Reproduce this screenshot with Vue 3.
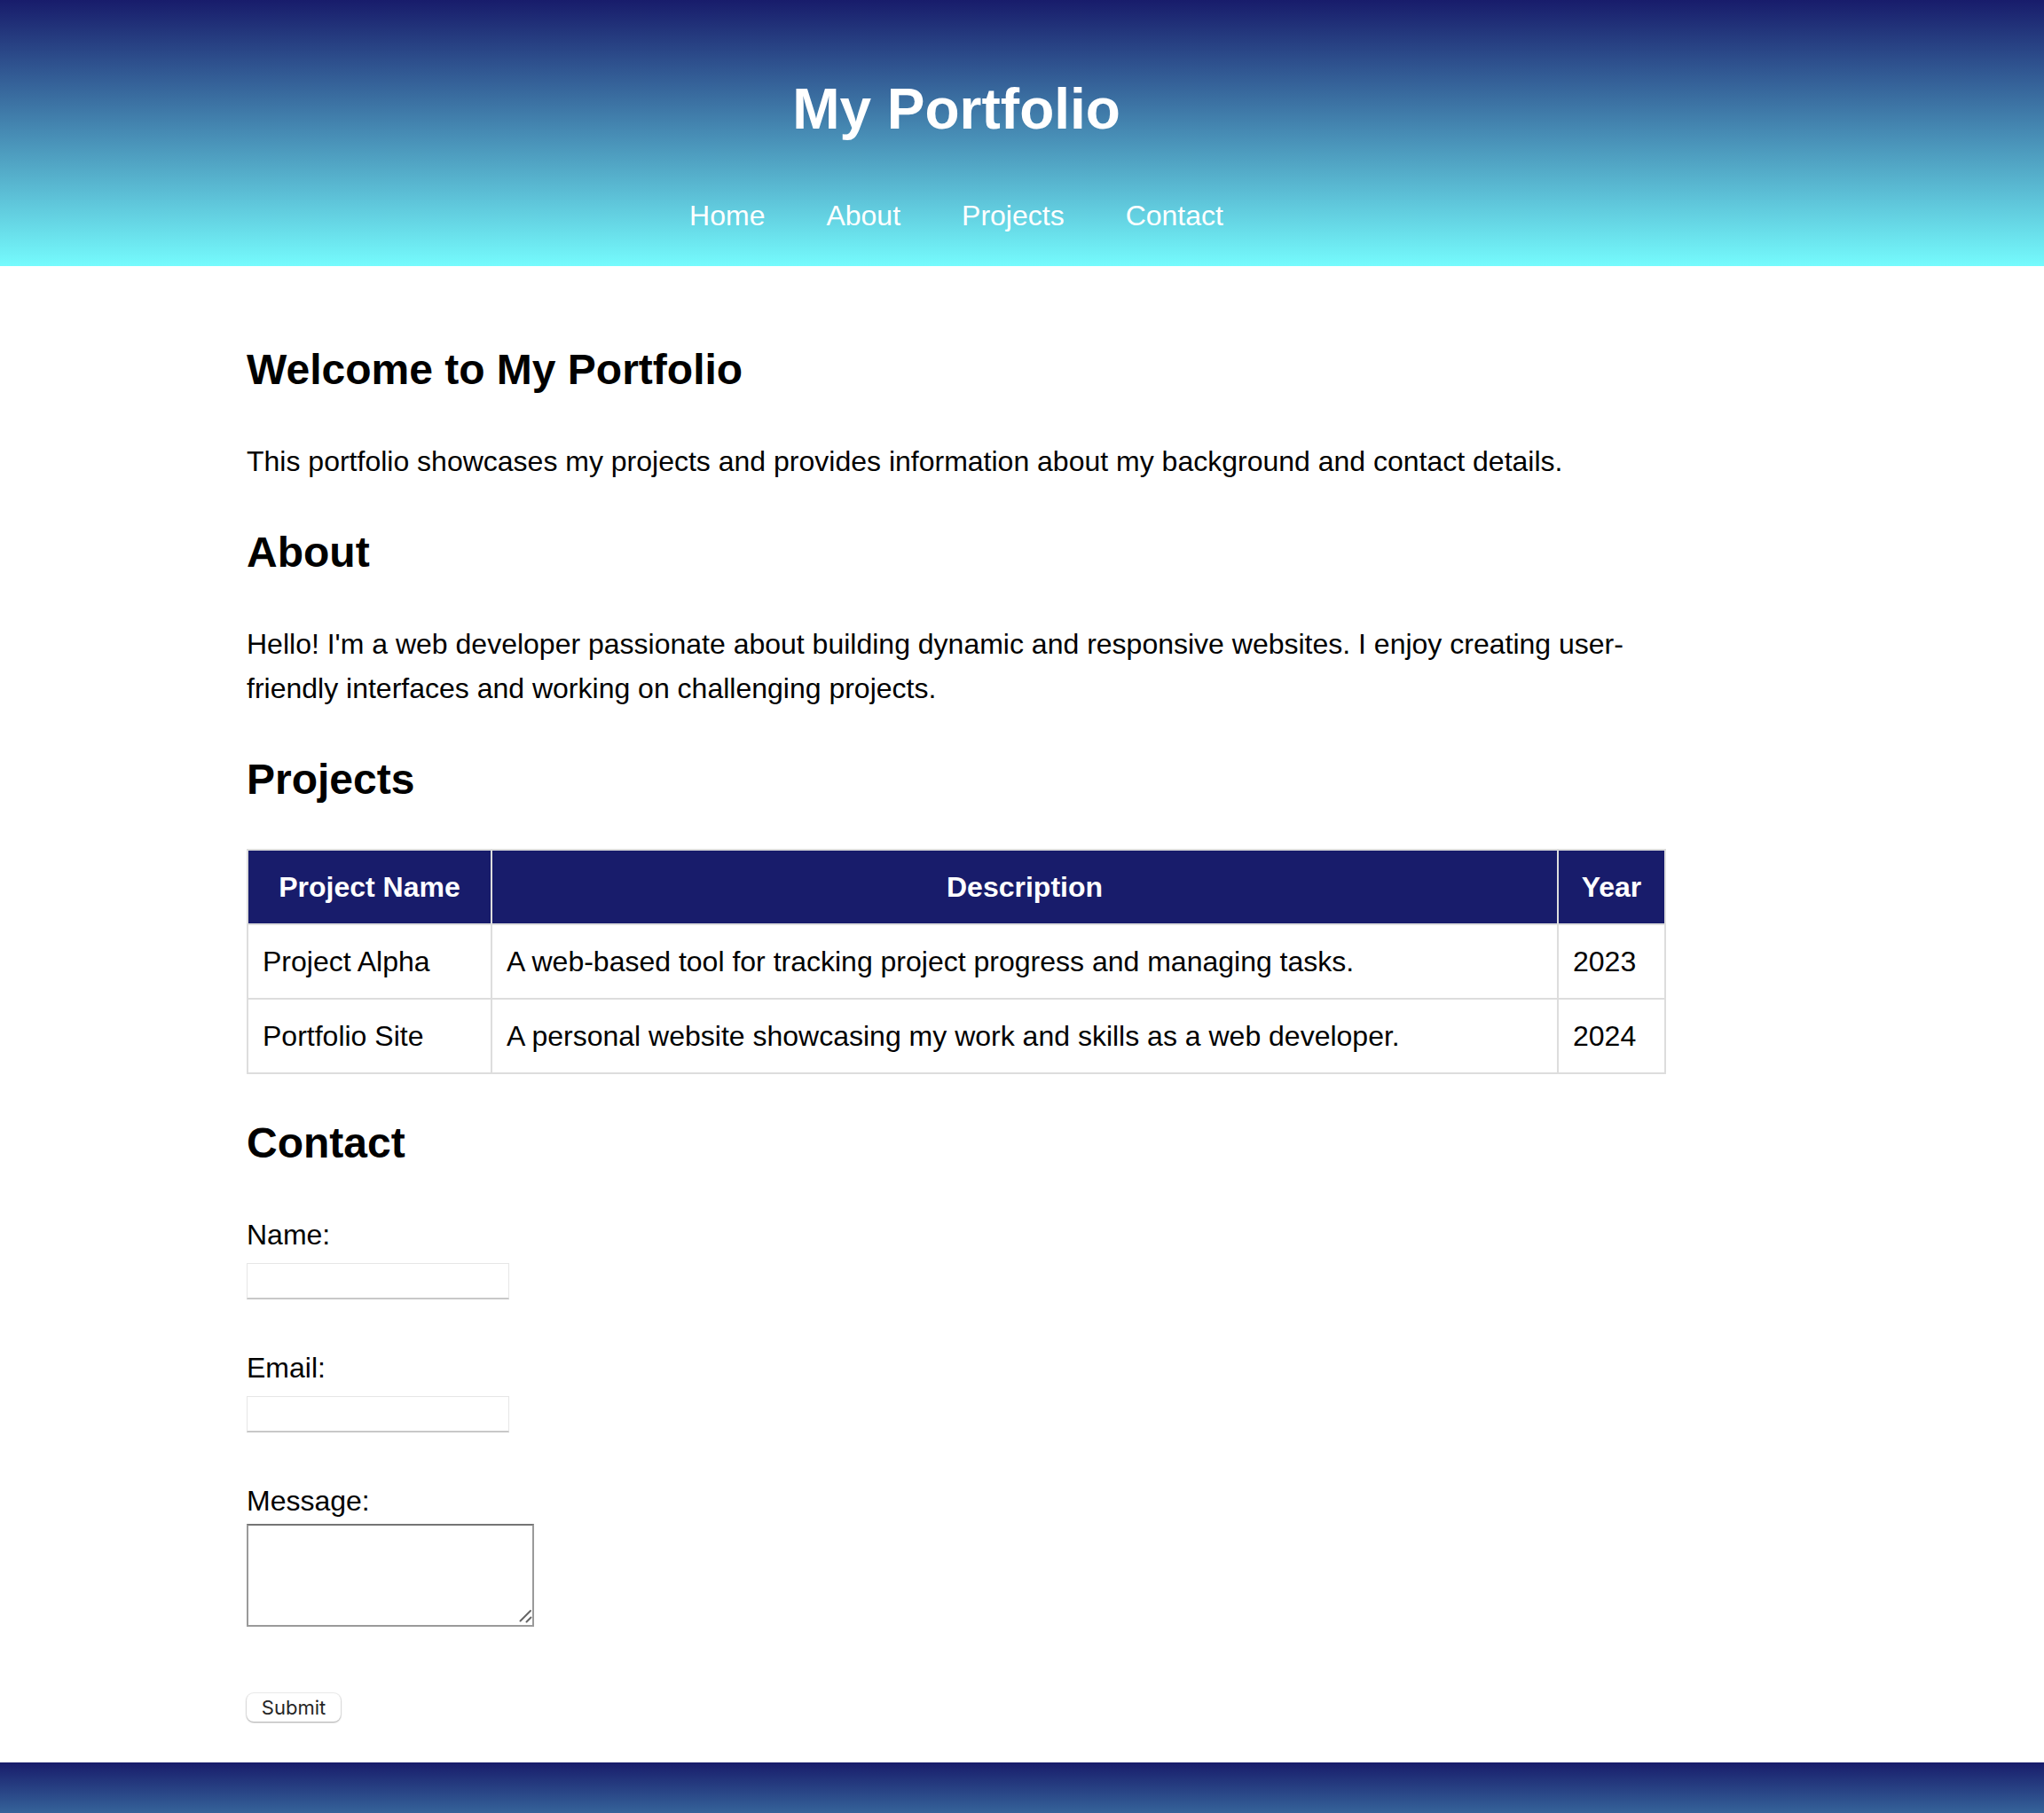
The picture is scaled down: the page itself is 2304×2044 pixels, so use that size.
<script setup>
import { ref } from 'vue'

const links = [
  { label: 'Home', href: '#home' },
  { label: 'About', href: '#about' },
  { label: 'Projects', href: '#projects' },
  { label: 'Contact', href: '#contact' },
]

const projects = [
  {
    name: 'Project Alpha',
    description: 'A web-based tool for tracking project progress and managing tasks.',
    year: 2023,
  },
  {
    name: 'Portfolio Site',
    description: 'A personal website showcasing my work and skills as a web developer.',
    year: 2024,
  },
]

const name = ref('')
const email = ref('')
const message = ref('')
</script>

<template>
  <div class="page">
    <header class="site-header">
      <h1>My Portfolio</h1>
      <nav>
        <a v-for="link in links" :key="link.href" :href="link.href">{{ link.label }}</a>
      </nav>
    </header>

    <main>
      <div class="container">
        <section id="home">
          <h2>Welcome to My Portfolio</h2>
          <p>This portfolio showcases my projects and provides information about my background and contact details.</p>
        </section>

        <section id="about">
          <h2>About</h2>
          <p>Hello! I'm a web developer passionate about building dynamic and responsive websites. I enjoy creating user-friendly interfaces and working on challenging projects.</p>
        </section>

        <section id="projects">
          <h2>Projects</h2>
          <table>
            <colgroup>
              <col class="col-name" />
              <col />
              <col class="col-year" />
            </colgroup>
            <thead>
              <tr>
                <th scope="col">Project Name</th>
                <th scope="col">Description</th>
                <th scope="col">Year</th>
              </tr>
            </thead>
            <tbody>
              <tr v-for="project in projects" :key="project.name">
                <td>{{ project.name }}</td>
                <td>{{ project.description }}</td>
                <td>{{ project.year }}</td>
              </tr>
            </tbody>
          </table>
        </section>

        <section id="contact">
          <h2>Contact</h2>
          <form @submit.prevent>
            <div class="field">
              <label for="name">Name:</label>
              <input id="name" v-model="name" type="text" name="name" />
            </div>
            <div class="field">
              <label for="email">Email:</label>
              <input id="email" v-model="email" type="email" name="email" />
            </div>
            <div class="field field-message">
              <label for="message">Message:</label>
              <div class="textarea-box">
                <textarea id="message" v-model="message" name="message"></textarea>
                <svg class="grip" viewBox="0 0 16 16" aria-hidden="true">
                  <path d="M2.500 13.500L14 2M9.500 14.500L14.500 9.500" />
                </svg>
              </div>
            </div>
            <button type="submit">Submit</button>
          </form>
        </section>
      </div>
    </main>

    <footer class="site-footer"></footer>
  </div>
</template>

<style>
body {
  margin: 0;
}
</style>

<style scoped>
.page {
  --navy: #181c6b;
  --aqua: #75fbfd;
  --gutter: 148px;
  display: flex;
  flex-direction: column;
  min-height: 100vh;
  box-sizing: border-box;
  background: #fff;
  color: #000;
  font: 32px/50px "Liberation Sans", Arial, sans-serif;
}

.site-header {
  padding: 32px calc(32px + var(--gutter)) 32px 32px;
  background: linear-gradient(var(--navy), var(--aqua));
  color: #fff;
  text-align: center;
}

h1 {
  margin: 41px 0 45px;
  font-size: 64px;
  line-height: 100px;
}

nav {
  display: flex;
  justify-content: center;
  gap: 69px;
}

nav a {
  color: #fff;
  text-decoration: none;
}

main {
  padding: 39px var(--gutter) 46px 0;
}

.container {
  max-width: 1600px;
  margin: 0 auto;
}

h2 {
  margin: 40px 0;
  font-size: 48px;
  line-height: 76px;
}

p {
  margin: 0;
}

table {
  width: 100%;
  table-layout: fixed;
  border-collapse: collapse;
}

.col-name {
  width: 275px;
}

.col-year {
  width: 121px;
}

th,
td {
  padding: 16px;
  border: 2px solid #ddd;
  text-align: left;
}

th {
  background: var(--navy);
  color: #fff;
  text-align: center;
}

.field {
  display: flex;
  flex-direction: column;
  align-items: flex-start;
  height: 150px;
}

.field-message {
  height: 242px;
}

input {
  width: 296px;
  height: 41px;
  margin: 7px 0 0;
  padding: 4px 8px;
  box-sizing: border-box;
  border: 1px solid #e6e6e6;
  border-bottom: 2px solid #c8c8c8;
  border-radius: 0;
  background: #fff;
  font: 22px Inter, sans-serif;
}

.textarea-box {
  position: relative;
  width: 324px;
  height: 116px;
  margin-top: 1px;
}

textarea {
  display: block;
  width: 100%;
  height: 100%;
  padding: 4px;
  box-sizing: border-box;
  border: 2px solid #9a9a9a;
  border-top-color: #757575;
  border-radius: 0;
  background: #fff;
  font: 22px "Liberation Mono", monospace;
  resize: none;
}

.grip {
  position: absolute;
  right: 2px;
  bottom: 4px;
  width: 16px;
  height: 16px;
  fill: none;
  stroke: #666;
  stroke-width: 2;
  stroke-linecap: round;
  pointer-events: none;
}

button {
  display: block;
  width: 106px;
  height: 32px;
  padding: 0;
  border: 0;
  border-radius: 8px;
  background: #fff;
  box-shadow: 0 0 1px 1px rgba(0, 0, 0, 0.08), 0 1px 2px rgba(0, 0, 0, 0.3);
  color: #262626;
  font: 22px/32px Inter, sans-serif;
}

.site-footer {
  flex: 1;
  min-height: 56px;
  background: linear-gradient(var(--navy), var(--aqua)) top / 100% 178px no-repeat;
}
</style>
